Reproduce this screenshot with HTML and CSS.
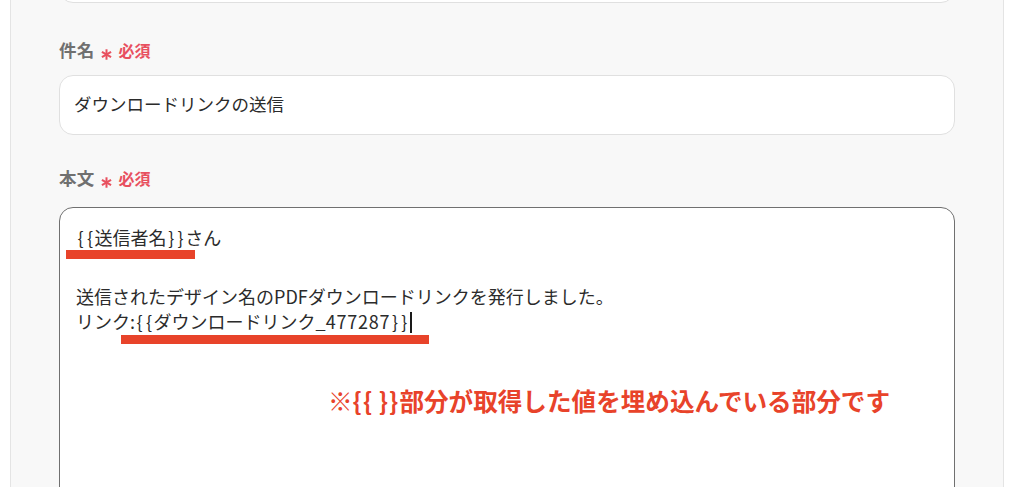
FILE: index.html
```html
<!DOCTYPE html>
<html lang="ja">
<head>
<meta charset="utf-8">
<link rel="stylesheet" href="styles.css">
</head>
<body>
<div class="panel">
  <div class="stub"></div>

  <div class="label label-first">
    <span class="label-text">件名</span>
    <svg class="req-mark" viewBox="0 0 12 12" width="11" height="11"><g stroke="#e8505f" stroke-width="2.2" stroke-linecap="butt"><line x1="6" y1="0.3" x2="6" y2="11.7"/><line x1="1" y1="3.1" x2="11" y2="8.9"/><line x1="1" y1="8.9" x2="11" y2="3.1"/></g></svg>
    <span class="req-text">必須</span>
  </div>
  <div class="input">ダウンロードリンクの送信</div>

  <div class="label label-second">
    <span class="label-text">本文</span>
    <svg class="req-mark" viewBox="0 0 12 12" width="11" height="11"><g stroke="#e8505f" stroke-width="2.2" stroke-linecap="butt"><line x1="6" y1="0.3" x2="6" y2="11.7"/><line x1="1" y1="3.1" x2="11" y2="8.9"/><line x1="1" y1="8.9" x2="11" y2="3.1"/></g></svg>
    <span class="req-text">必須</span>
  </div>
  <div class="textarea">
    <p class="para"><span class="brace">{{</span>送信者名<span class="brace">}}</span>さん</p>
    <p class="para para-gap">送信されたデザイン名のPDFダウンロードリンクを発行しました。<br>リンク:<span class="brace">{{</span>ダウンロードリンク_<span class="num">477287</span><span class="brace">}}</span><span class="caret"></span></p>

    <div class="mark mark-one"></div>
    <div class="mark mark-two"></div>
    <div class="note">※<span class="brace-lg">{{</span> <span class="brace-lg">}}</span>部分が取得した値を埋め込んでいる部分です</div>
  </div>
</div>
</body>
</html>
```

FILE: styles.css
```css
html, body {
  margin: 0;
  padding: 0;
  background: #ffffff;
  height: 100%;
  overflow: hidden;
}

body {
  font-family: "Noto Sans CJK JP", "Noto Sans", sans-serif;
  color: #2b2b2b;
}

.panel {
  margin-left: 10px;
  width: 994px;
  box-sizing: border-box;
  min-height: 600px;
  background: #f8f8f8;
  border-left: 1px solid #e4e4e4;
  border-right: 1px solid #e4e4e4;
  padding: 0 48px;
}

.stub {
  height: 50px;
  margin-top: -47px;
  box-sizing: border-box;
  background: #ffffff;
  border: 1px solid #e0e0e0;
  border-radius: 14px;
}

.label {
  display: flex;
  align-items: center;
  height: 24px;
  line-height: 24px;
}

.label-first { margin-top: 35px; }
.label-second { margin-top: 31px; }

.label-text {
  font-size: 17.5px;
  font-weight: 700;
  color: #707070;
  letter-spacing: 0.2px;
}

.req-mark {
  margin-left: 7px;
  margin-top: 8px;
}

.req-text {
  margin-left: 6px;
  font-size: 16px;
  font-weight: 700;
  color: #e8505f;
}

.input {
  margin-top: 13px;
  height: 60px;
  box-sizing: border-box;
  background: #ffffff;
  border: 1px solid #e0e0e0;
  border-radius: 14px;
  padding: 0 14px 4px;
  display: flex;
  align-items: center;
  font-size: 17.5px;
  color: #2b2b2b;
}

.textarea {
  position: relative;
  margin-top: 17px;
  height: 400px;
  box-sizing: border-box;
  background: #ffffff;
  border: 1px solid #707070;
  border-radius: 14px;
  padding: 17px 16px 0;
  font-size: 18px;
  line-height: 25px;
  color: #2b2b2b;
}

.para {
  margin: 0;
}

.para-gap {
  margin-top: 34px;
}

.brace {
  letter-spacing: 3.2px;
  padding-left: 1.6px;
  margin-right: -1.6px;
}

.num {
  letter-spacing: 0.8px;
}

.caret {
  display: inline-block;
  width: 2px;
  height: 21px;
  background: #1a1a1a;
  vertical-align: -4px;
  margin-left: 1px;
}

.mark {
  position: absolute;
  height: 9px;
  background: #e8432a;
}

.mark-one {
  left: 6px;
  top: 42px;
  width: 129px;
}

.mark-two {
  left: 61px;
  top: 127px;
  width: 308px;
}

.note {
  position: absolute;
  left: 268px;
  top: 177px;
  font-size: 24.6px;
  line-height: 30px;
  font-weight: 700;
  color: #e8432a;
  white-space: nowrap;
}

.brace-lg {
  letter-spacing: 1px;
}
```
